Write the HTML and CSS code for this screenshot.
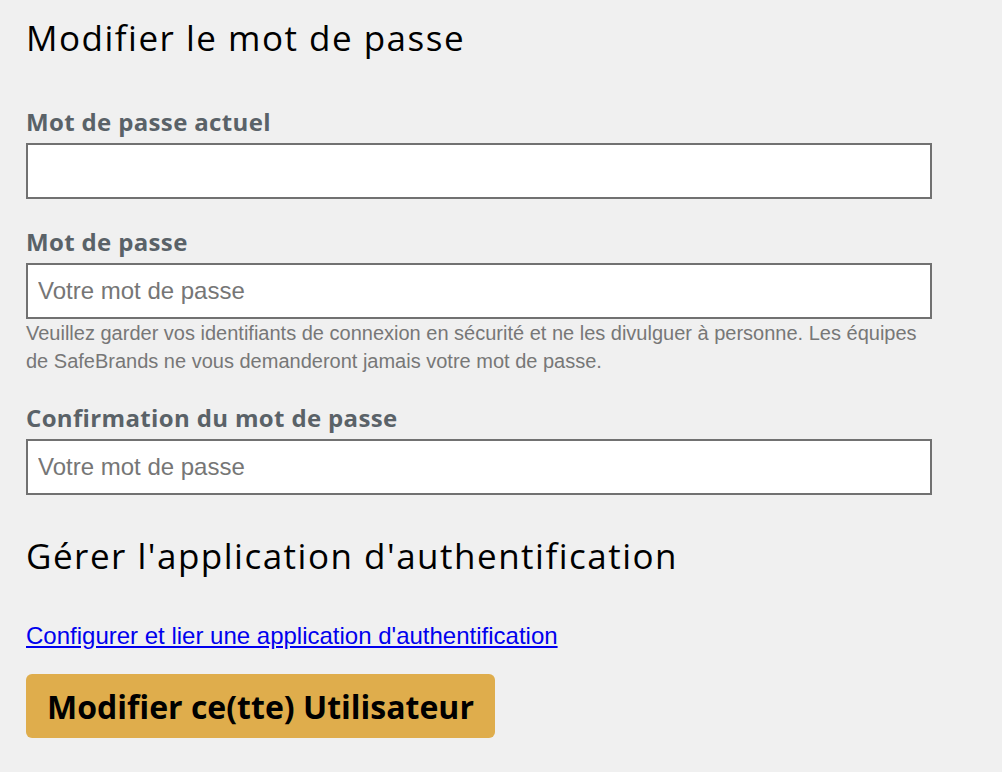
FILE: index.html
```html
<!DOCTYPE html>
<html lang="fr">
<head>
    <meta charset="UTF-8">
    <meta name="viewport" content="width=device-width, initial-scale=1.0">
    <title>Modifier le mot de passe</title>
    <link rel="stylesheet" href="styles.css">
</head>
<body>
    <div class="page">
        <h1>Modifier le mot de passe</h1>

        <div class="field">
            <label for="current">Mot de passe actuel</label>
            <input type="password" id="current">
        </div>

        <div class="field">
            <label for="password">Mot de passe</label>
            <input type="password" id="password" placeholder="Votre mot de passe">
            <p class="help">Veuillez garder vos identifiants de connexion en sécurité et ne les divulguer à personne. Les équipes de SafeBrands ne vous demanderont jamais votre mot de passe.</p>
        </div>

        <div class="field">
            <label for="confirm">Confirmation du mot de passe</label>
            <input type="password" id="confirm" placeholder="Votre mot de passe">
        </div>

        <h2>Gérer l'application d'authentification</h2>
        <a class="link" href="#">Configurer et lier une application d'authentification</a>

        <div>
            <button class="submit">Modifier ce(tte) Utilisateur</button>
        </div>
    </div>
</body>
</html>
```

FILE: styles.css
```css
body {
    margin: 0;
    background-color: #f0f0f0;
    font-family: "Liberation Sans", Arial, sans-serif;
    color: #000;
}
.page {
    width: 906px;
    padding: 16px 0 0 26px;
}
h1, h2 {
    font-family: "Open Sans", sans-serif;
    font-weight: 400;
    font-size: 35px;
    line-height: 44px;
    letter-spacing: 1.5px;
    margin: 0;
}
h1 {
    margin-bottom: 46px;
}
h2 {
    margin: 39px 0 44px;
}
.field {
    margin-bottom: 27px;
}
.field:last-of-type {
    margin-bottom: 0;
}
label {
    display: block;
    font-family: "Open Sans", sans-serif;
    font-weight: 700;
    font-size: 24px;
    line-height: 32px;
    letter-spacing: 0.35px;
    color: #5a6268;
    margin-bottom: 5px;
}
input {
    display: block;
    box-sizing: border-box;
    width: 100%;
    height: 56px;
    border: 2px solid #717171;
    background: #fff;
    padding: 0 10px;
    font-family: "Liberation Sans", Arial, sans-serif;
    font-size: 24px;
    color: #333;
    outline: none;
}
input::placeholder {
    color: #767676;
}
.help {
    margin: 0;
    font-size: 20px;
    line-height: 28px;
    color: #777;
}
.link {
    display: inline-block;
    font-size: 24px;
    line-height: 28px;
    color: #0000ee;
    margin-bottom: 24px;
}
.submit {
    background-color: #dfad4c;
    border: none;
    border-radius: 6px;
    padding: 0 21px;
    height: 64px;
    font-family: "Open Sans", sans-serif;
    font-weight: 700;
    font-size: 32px;
    color: #000;
    cursor: pointer;
}
```
